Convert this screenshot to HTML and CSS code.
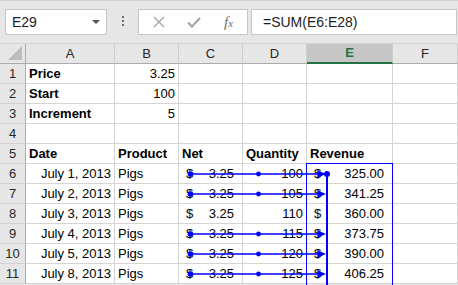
FILE: index.html
```html
<!DOCTYPE html>
<html lang="en">
<head>
    <meta charset="UTF-8">
    <meta name="viewport" content="width=device-width, initial-scale=1.0">
    <title>Trace Precedents</title>
    <link rel="stylesheet" href="styles.css">
</head>
<body>
    <div class="toolbar">
        <div class="namebox">
            <span>E29</span>
            <svg class="drop" width="8" height="5" viewBox="0 0 8 5"><path d="M0 0h8L4 4z" fill="#555"/></svg>
        </div>
        <div class="grip"><i></i><i></i><i></i></div>
        <div class="fxbox">
            <svg class="ico" width="12" height="12" viewBox="0 0 12 12"><path d="M1 1L11 11M11 1L1 11" stroke="#a6a6a6" stroke-width="1.4" fill="none"/></svg>
            <svg class="ico" width="14" height="12" viewBox="0 0 14 12"><path d="M1 6.5L5 10.5L13 2" stroke="#a6a6a6" stroke-width="2.2" fill="none"/></svg>
            <span class="fx">f<small>x</small></span>
        </div>
        <div class="formula">=SUM(E6:E28)</div>
    </div>

    <div class="sheet">
        <div class="hd corner"><svg width="14" height="14" viewBox="0 0 14 14"><path d="M14 0V14H0z" fill="#bdbdbd"/></svg></div>
        <div class="hd">A</div>
        <div class="hd">B</div>
        <div class="hd">C</div>
        <div class="hd">D</div>
        <div class="hd sel">E</div>
        <div class="hd">F</div>

        <div class="rh">1</div><div class="c b">Price</div><div class="c r">3.25</div><div class="c"></div><div class="c"></div><div class="c"></div><div class="c"></div>
        <div class="rh">2</div><div class="c b">Start</div><div class="c r">100</div><div class="c"></div><div class="c"></div><div class="c"></div><div class="c"></div>
        <div class="rh">3</div><div class="c b">Increment</div><div class="c r">5</div><div class="c"></div><div class="c"></div><div class="c"></div><div class="c"></div>
        <div class="rh">4</div><div class="c"></div><div class="c"></div><div class="c"></div><div class="c"></div><div class="c"></div><div class="c"></div>
        <div class="rh">5</div><div class="c b">Date</div><div class="c b">Product</div><div class="c b">Net</div><div class="c b">Quantity</div><div class="c b">Revenue</div><div class="c"></div>

        <div class="rh">6</div><div class="c r">July 1, 2013</div><div class="c">Pigs</div><div class="c acc"><span>$</span><span>3.25</span></div><div class="c r">100</div><div class="c acc"><span>$</span><span>325.00</span></div><div class="c"></div>
        <div class="rh">7</div><div class="c r">July 2, 2013</div><div class="c">Pigs</div><div class="c acc"><span>$</span><span>3.25</span></div><div class="c r">105</div><div class="c acc"><span>$</span><span>341.25</span></div><div class="c"></div>
        <div class="rh">8</div><div class="c r">July 3, 2013</div><div class="c">Pigs</div><div class="c acc"><span>$</span><span>3.25</span></div><div class="c r">110</div><div class="c acc"><span>$</span><span>360.00</span></div><div class="c"></div>
        <div class="rh">9</div><div class="c r">July 4, 2013</div><div class="c">Pigs</div><div class="c acc"><span>$</span><span>3.25</span></div><div class="c r">115</div><div class="c acc"><span>$</span><span>373.75</span></div><div class="c"></div>
        <div class="rh">10</div><div class="c r">July 5, 2013</div><div class="c">Pigs</div><div class="c acc"><span>$</span><span>3.25</span></div><div class="c r">120</div><div class="c acc"><span>$</span><span>390.00</span></div><div class="c"></div>
        <div class="rh">11</div><div class="c r">July 8, 2013</div><div class="c">Pigs</div><div class="c acc"><span>$</span><span>3.25</span></div><div class="c r">125</div><div class="c acc"><span>$</span><span>406.25</span></div><div class="c"></div>
    </div>

    <!-- trace precedents arrows drawn over the sheet -->
    <svg class="arrows" width="458" height="285" viewBox="0 0 458 285">
        <rect x="306.5" y="163.5" width="86" height="140" fill="none" stroke="#0000ff" stroke-width="1"/>
        <g fill="#0000ff" stroke="#0000ff">
            <g id="arrow">
                <line x1="191" y1="174" x2="321" y2="174" stroke-width="1.5"/>
                <circle cx="190.5" cy="174" r="2.8" stroke="none"/>
                <circle cx="258.5" cy="174" r="2.4" stroke="none"/>
                <path d="M318 170.5L326 174L318 177.5z" stroke="none"/>
            </g>
            <use href="#arrow" y="20"/>
            <use href="#arrow" y="60"/>
            <use href="#arrow" y="80"/>
            <use href="#arrow" y="100"/>
            <line x1="327" y1="174" x2="327" y2="290" stroke-width="2"/>
            <circle cx="327" cy="174" r="3" stroke="none"/>
        </g>
    </svg>
</body>
</html>
```

FILE: styles.css
```css
body {
    margin: 0;
    width: 458px;
    height: 285px;
    overflow: hidden;
    position: relative;
    background-color: #e6e6e6;
    font-family: "Liberation Sans", Arial, sans-serif;
}

.toolbar {
    box-sizing: border-box;
    height: 44px;
    padding: 9px 0 0 5px;
    display: flex;
    border-top: 1px solid #cfcfcf;
    border-bottom: 1px solid #d6d6d6;
}

.namebox {
    box-sizing: border-box;
    width: 102px;
    height: 26px;
    margin-top: -1px;
    background: #fff;
    border: 1px solid #c6c6c6;
    display: flex;
    align-items: center;
    justify-content: space-between;
    padding: 0 6px 0 6px;
    font-size: 14px;
    color: #222;
}

.grip {
    width: 31px;
    display: flex;
    flex-direction: column;
    align-items: center;
    gap: 2px;
    padding-top: 6px;
    box-sizing: border-box;
    height: 26px;
}

.grip i {
    width: 2px;
    height: 2px;
    background: #6b6b6b;
}

.fxbox {
    box-sizing: border-box;
    width: 110px;
    height: 26px;
    margin-top: -1px;
    background: #fff;
    border: 1px solid #c6c6c6;
    display: flex;
    align-items: center;
    padding-left: 14px;
    gap: 22px;
}

.fx {
    font-family: "Liberation Serif", serif;
    font-style: italic;
    font-size: 15px;
    color: #6f6f6f;
    margin-left: 1px;
}

.fx small {
    font-size: 11px;
}

.formula {
    box-sizing: border-box;
    margin: -1px 0 0 3px;
    width: 206px;
    height: 26px;
    background: #fff;
    border: 1px solid #c6c6c6;
    padding: 4px 0 0 11px;
    font-size: 14px;
    color: #222;
}

.sheet {
    display: grid;
    grid-template-columns: 26px 89px 64px 64px 64px 86px 65px;
    grid-auto-rows: 20px;
    background: #fff;
    font-size: 13px;
    color: #000;
}

.hd {
    box-sizing: border-box;
    background: #e6e6e6;
    border-right: 1px solid #cdcdcd;
    border-bottom: 1px solid #ababab;
    text-align: center;
    line-height: 19px;
    color: #262626;
}

.corner {
    border-right-color: #ababab;
    display: flex;
    align-items: flex-end;
    justify-content: flex-end;
    padding: 0 3px 3px 0;
}

.corner svg {
    display: block;
}

.hd.sel {
    background: #c6c6c6;
    color: #217346;
    border-bottom: 2px solid #217346;
    line-height: 18px;
    font-weight: bold;
}

.rh {
    box-sizing: border-box;
    background: #e6e6e6;
    border-right: 1px solid #ababab;
    border-bottom: 1px solid #d0d0d0;
    text-align: center;
    line-height: 20px;
    color: #262626;
}

.c {
    box-sizing: border-box;
    border-right: 1px solid #d4d4d4;
    border-bottom: 1px solid #d4d4d4;
    padding: 1px 3px 0 3px;
    line-height: 18px;
    white-space: nowrap;
    overflow: hidden;
}

.b {
    font-weight: bold;
}

.r {
    text-align: right;
}

.acc {
    display: flex;
    justify-content: space-between;
    padding: 1px 8px 0 7px;
}

.arrows {
    position: absolute;
    left: 0;
    top: 0;
    pointer-events: none;
}
```
